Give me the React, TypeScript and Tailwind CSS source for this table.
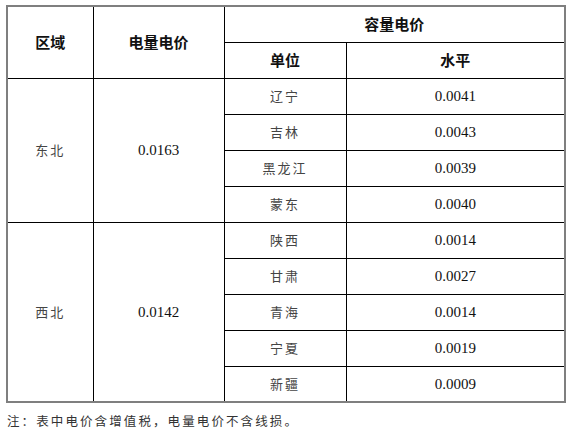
import React from 'react';

const serif = { fontFamily: '"Liberation Serif", "Noto Sans CJK SC", serif' };

type Group = { region: string; price: string; rows: [string, string][] };

const groups: Group[] = [
  {
    region: '东北',
    price: '0.0163',
    rows: [
      ['辽宁', '0.0041'],
      ['吉林', '0.0043'],
      ['黑龙江', '0.0039'],
      ['蒙东', '0.0040'],
    ],
  },
  {
    region: '西北',
    price: '0.0142',
    rows: [
      ['陕西', '0.0014'],
      ['甘肃', '0.0027'],
      ['青海', '0.0014'],
      ['宁夏', '0.0019'],
      ['新疆', '0.0009'],
    ],
  },
];

const cell = 'border border-[#000] text-center align-middle p-0';
const head = `${cell} font-bold text-[15px] text-[#111] font-['Noto_Sans_CJK_SC',sans-serif]`;
const cjk = `${cell} text-[13px] tracking-[2px] text-[#444] font-['Noto_Sans_CJK_SC',sans-serif]`;
const num = `${cell} text-[15px] text-[#111]`;

export default function App() {
  return (
    <div className="w-[571px] h-[439px] bg-white pl-[6px] pt-[5px]">
      <table className="border-collapse border-2 border-[#7f7f7f] table-fixed w-[558px]">
        <colgroup>
          <col className="w-[86px]" />
          <col className="w-[131px]" />
          <col className="w-[122px]" />
          <col className="w-[219px]" />
        </colgroup>
        <thead>
          <tr className="h-[36px]">
            <th rowSpan={2} className={head}>区域</th>
            <th rowSpan={2} className={head}>电量电价</th>
            <th colSpan={2} className={head}>容量电价</th>
          </tr>
          <tr className="h-[36px]">
            <th className={head}>单位</th>
            <th className={head}>水平</th>
          </tr>
        </thead>
        <tbody>
          {groups.map((g) =>
            g.rows.map(([unit, level], i) => (
              <tr key={unit} className="h-[36px]">
                {i === 0 && (
                  <>
                    <td rowSpan={g.rows.length} className={cjk}>{g.region}</td>
                    <td rowSpan={g.rows.length} className={num} style={serif}>{g.price}</td>
                  </>
                )}
                <td className={cjk}>{unit}</td>
                <td className={num} style={serif}>{level}</td>
              </tr>
            ))
          )}
        </tbody>
      </table>
      <p className="mt-[8px] ml-px text-[12.5px] tracking-[2.1px] text-[#333] font-['Noto_Sans_CJK_SC',sans-serif] leading-[20px]">
        注：表中电价含增值税，电量电价不含线损。
      </p>
    </div>
  );
}
